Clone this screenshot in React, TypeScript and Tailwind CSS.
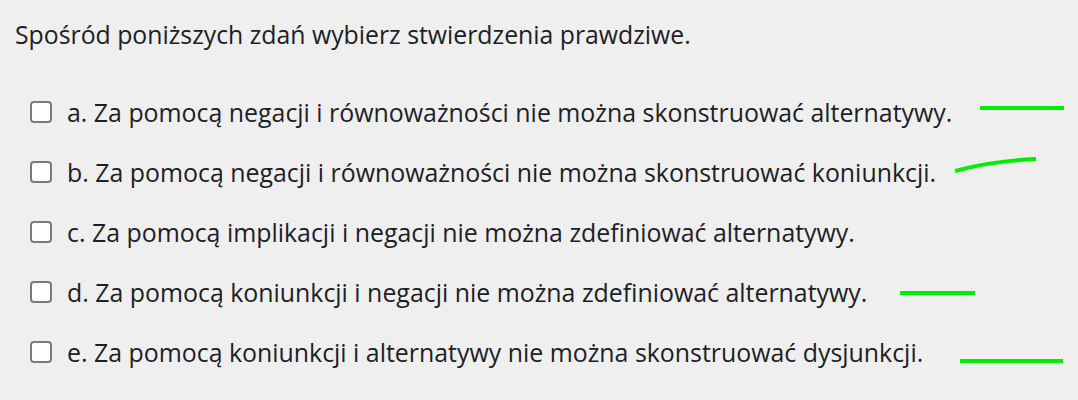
import React from 'react';

const options = [
  'a. Za pomocą negacji i równoważności nie można skonstruować alternatywy.',
  'b. Za pomocą negacji i równoważności nie można skonstruować koniunkcji.',
  'c. Za pomocą implikacji i negacji nie można zdefiniować alternatywy.',
  'd. Za pomocą koniunkcji i negacji nie można zdefiniować alternatywy.',
  'e. Za pomocą koniunkcji i alternatywy nie można skonstruować dysjunkcji.',
];

export default function App() {
  return (
    <div
      className="relative w-[1078px] h-[400px] bg-[#efefef] text-[#1d2125] overflow-hidden"
      style={{ fontFamily: '"Open Sans", "Noto Sans", sans-serif' }}
    >
      <div className="pl-[15px] pt-[18px] text-[24.8px] leading-[32px]">
        Spośród poniższych zdań wybierz stwierdzenia prawdziwe.
      </div>

      <div className="flex flex-col gap-[28px] pl-[30px] pt-[46px]">
        {options.map((o) => (
          <label key={o} className="flex items-center gap-[15px] text-[24.9px] leading-[32px]">
            <span className="w-[22px] h-[22px] rounded-[4px] border-2 border-[#7a7a7a] bg-white shrink-0" />
            <span>{o}</span>
          </label>
        ))}
      </div>

      {/* green pen marks */}
      <svg className="absolute inset-0 pointer-events-none" width="1078" height="400">
        <g stroke="#00ee00" strokeWidth="4" fill="none" strokeLinecap="butt">
          <line x1="980" y1="108" x2="1064" y2="108" />
          <path d="M955 171 C 975 166, 995 161, 1036 159" />
          <line x1="900" y1="293" x2="975" y2="293" />
          <line x1="960" y1="361" x2="1063" y2="361" />
        </g>
      </svg>
    </div>
  );
}
